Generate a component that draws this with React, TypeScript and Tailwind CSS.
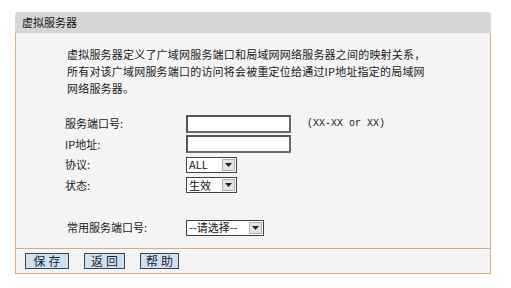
import React from "react";

const cjk = { fontFamily: '"Noto Sans CJK SC", "Noto Sans", sans-serif' };

function Select({ value, width }: { value: string; width: number }) {
  return (
    <div
      className="flex h-[16px] items-stretch border border-[#404040] bg-white"
      style={{ width }}
    >
      <div className="flex flex-1 items-center pl-[2px] text-[11px] leading-none text-[#111]">
        {value}
      </div>
      <div className="m-[1px] flex w-[13px] items-center justify-center border border-[#b0b0b0] bg-[#e4e4e4]">
        <svg width="7" height="4" viewBox="0 0 7 4">
          <polygon points="0,0 7,0 3.5,4" fill="#222" />
        </svg>
      </div>
    </div>
  );
}

function Input() {
  return (
    <div className="h-[18px] w-[105px] border-2 border-t-[#555] border-l-[#555] border-b-[#6a6a6a] border-r-[#6a6a6a] bg-white" />
  );
}

function Btn({ label, w }: { label: string; w: number }) {
  return (
    <div
      className="flex h-[16px] items-center justify-center border border-[#3a4450] bg-[#cfe0ef] text-[12px] leading-none tracking-[3px] text-[#1a2330]"
      style={{ width: w, paddingLeft: 3 }}
    >
      {label}
    </div>
  );
}

export default function App() {
  return (
    <div className="h-[288px] w-[511px] bg-white pl-[15px] pt-[12px]" style={cjk}>
      <div className="w-[476px]">
        <div className="flex h-[21px] items-center rounded-t-[3px] bg-[#d6d6d6] pl-[7px] text-[11px] text-[#111]">
          虚拟服务器
        </div>
        <div className="h-[215px] border-x border-[#d6b07c] bg-[#f4f4f4] pl-[49px] pt-[13px] text-[11px] text-[#1a1a1a]">
          <div className="pl-[2px] leading-[17px] tracking-[0.2px]">
            <div>虚拟服务器定义了广域网服务端口和局域网网络服务器之间的映射关系，</div>
            <div>所有对该广域网服务端口的访问将会被重定位给通过IP地址指定的局域网</div>
            <div>网络服务器。</div>
          </div>
          <div className="mt-[16px] flex flex-col">
            <div className="flex h-[21px] items-center">
              <div className="w-[121px]">服务端口号:</div>
              <Input />
              <div
                className="ml-[16px] text-[10px] text-[#222]"
                style={{ fontFamily: '"Liberation Mono", monospace' }}
              >
                (XX-XX or XX)
              </div>
            </div>
            <div className="flex h-[20px] items-center">
              <div className="w-[121px]">IP地址:</div>
              <Input />
            </div>
            <div className="flex h-[21px] items-center">
              <div className="w-[121px]">协议:</div>
              <Select value="ALL" width={51} />
            </div>
            <div className="flex h-[20px] items-center">
              <div className="w-[121px]">状态:</div>
              <Select value="生效" width={51} />
            </div>
            <div className="mt-[22px] flex h-[21px] items-center">
              <div className="w-[121px] pl-[2px]">常用服务端口号:</div>
              <Select value="--请选择--" width={78} />
            </div>
          </div>
        </div>
        <div className="flex h-[26px] items-center gap-[15px] border border-[#d6b07c] bg-[#f4f4f4] pl-[9px]">
          <Btn label="保存" w={44} />
          <Btn label="返回" w={41} />
          <Btn label="帮助" w={39} />
        </div>
      </div>
    </div>
  );
}
